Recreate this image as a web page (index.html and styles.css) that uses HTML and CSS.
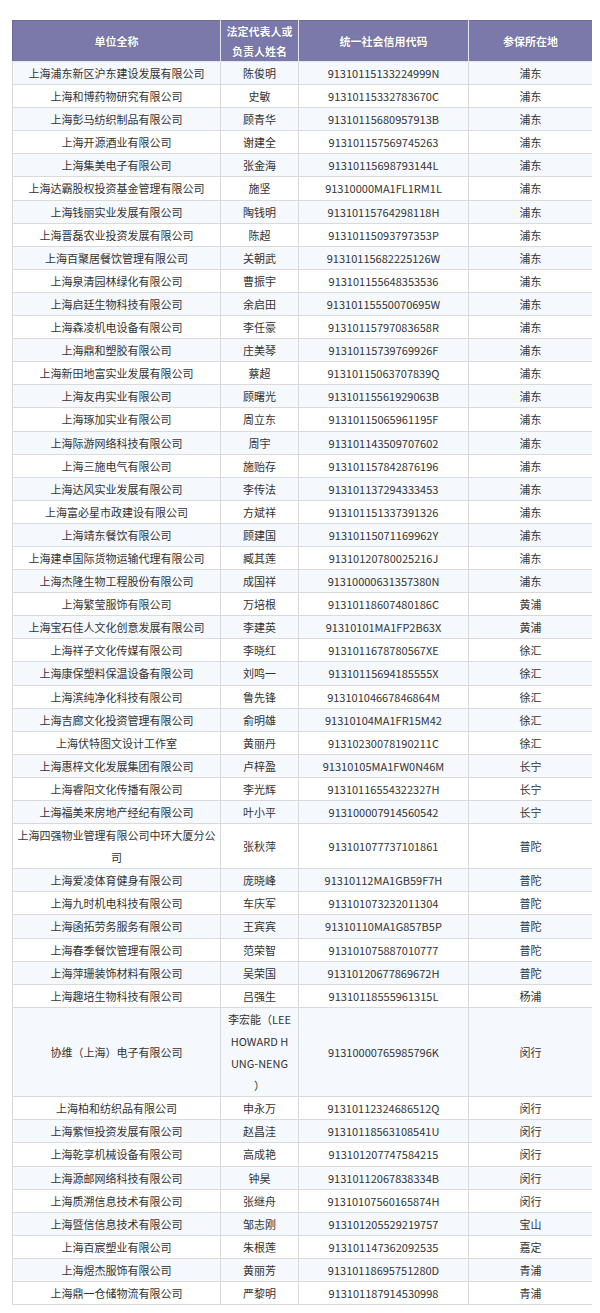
FILE: index.html
```html
<!DOCTYPE html>
<html lang="zh-CN">
<head>
<meta charset="utf-8">
<title>参保单位</title>
<link rel="stylesheet" href="styles.css">
</head>
<body>
<table class="list">
  <colgroup>
    <col class="c-name"><col class="c-rep"><col class="c-code"><col class="c-area">
  </colgroup>
  <thead>
    <tr><th>单位全称</th><th>法定代表人或<br>负责人姓名</th><th>统一社会信用代码</th><th>参保所在地</th></tr>
  </thead>
  <tbody>
    <tr><td>上海浦东新区沪东建设发展有限公司</td><td>陈俊明</td><td>91310115133224999N</td><td>浦东</td></tr>
    <tr><td>上海和博药物研究有限公司</td><td>史敏</td><td>91310115332783670C</td><td>浦东</td></tr>
    <tr><td>上海彭马纺织制品有限公司</td><td>顾青华</td><td>91310115680957913B</td><td>浦东</td></tr>
    <tr><td>上海开源酒业有限公司</td><td>谢建全</td><td>913101157569745263</td><td>浦东</td></tr>
    <tr><td>上海集美电子有限公司</td><td>张金海</td><td>91310115698793144L</td><td>浦东</td></tr>
    <tr><td>上海达霸股权投资基金管理有限公司</td><td>施坚</td><td>91310000MA1FL1RM1L</td><td>浦东</td></tr>
    <tr><td>上海钱丽实业发展有限公司</td><td>陶钱明</td><td>91310115764298118H</td><td>浦东</td></tr>
    <tr><td>上海晋磊农业投资发展有限公司</td><td>陈超</td><td>91310115093797353P</td><td>浦东</td></tr>
    <tr><td>上海百聚居餐饮管理有限公司</td><td>关朝武</td><td>91310115682225126W</td><td>浦东</td></tr>
    <tr><td>上海泉清园林绿化有限公司</td><td>曹振宇</td><td>913101155648353536</td><td>浦东</td></tr>
    <tr><td>上海启廷生物科技有限公司</td><td>余启田</td><td>91310115550070695W</td><td>浦东</td></tr>
    <tr><td>上海森凌机电设备有限公司</td><td>李任豪</td><td>91310115797083658R</td><td>浦东</td></tr>
    <tr><td>上海鼎和塑胶有限公司</td><td>庄美琴</td><td>91310115739769926F</td><td>浦东</td></tr>
    <tr><td>上海新田地富实业发展有限公司</td><td>蔡超</td><td>91310115063707839Q</td><td>浦东</td></tr>
    <tr><td>上海友冉实业有限公司</td><td>顾曙光</td><td>91310115561929063B</td><td>浦东</td></tr>
    <tr><td>上海琢加实业有限公司</td><td>周立东</td><td>91310115065961195F</td><td>浦东</td></tr>
    <tr><td>上海际游网络科技有限公司</td><td>周宇</td><td>913101143509707602</td><td>浦东</td></tr>
    <tr><td>上海三施电气有限公司</td><td>施贻存</td><td>913101157842876196</td><td>浦东</td></tr>
    <tr><td>上海达风实业发展有限公司</td><td>李传法</td><td>913101137294333453</td><td>浦东</td></tr>
    <tr><td>上海富必星市政建设有限公司</td><td>方斌祥</td><td>913101151337391326</td><td>浦东</td></tr>
    <tr><td>上海靖东餐饮有限公司</td><td>顾建国</td><td>91310115071169962Y</td><td>浦东</td></tr>
    <tr><td>上海建卓国际货物运输代理有限公司</td><td>臧其莲</td><td>91310120780025216J</td><td>浦东</td></tr>
    <tr><td>上海杰隆生物工程股份有限公司</td><td>成国祥</td><td>91310000631357380N</td><td>浦东</td></tr>
    <tr><td>上海繁莹服饰有限公司</td><td>万培根</td><td>91310118607480186C</td><td>黄浦</td></tr>
    <tr><td>上海宝石佳人文化创意发展有限公司</td><td>李建英</td><td>91310101MA1FP2B63X</td><td>黄浦</td></tr>
    <tr><td>上海祥子文化传媒有限公司</td><td>李晓红</td><td>9131011678780567XE</td><td>徐汇</td></tr>
    <tr><td>上海康保塑料保温设备有限公司</td><td>刘鸣一</td><td>91310115694185555X</td><td>徐汇</td></tr>
    <tr><td>上海滨纯净化科技有限公司</td><td>鲁先锋</td><td>91310104667846864M</td><td>徐汇</td></tr>
    <tr><td>上海吉廊文化投资管理有限公司</td><td>俞明雄</td><td>91310104MA1FR15M42</td><td>徐汇</td></tr>
    <tr><td>上海伏特图文设计工作室</td><td>黄丽丹</td><td>91310230078190211C</td><td>徐汇</td></tr>
    <tr><td>上海惠梓文化发展集团有限公司</td><td>卢梓盈</td><td>91310105MA1FW0N46M</td><td>长宁</td></tr>
    <tr><td>上海睿阳文化传播有限公司</td><td>李光辉</td><td>91310116554322327H</td><td>长宁</td></tr>
    <tr><td>上海福美来房地产经纪有限公司</td><td>叶小平</td><td>913100007914560542</td><td>长宁</td></tr>
    <tr><td>上海四强物业管理有限公司中环大厦分公司</td><td>张秋萍</td><td>913101077737101861</td><td>普陀</td></tr>
    <tr><td>上海爱凌体育健身有限公司</td><td>庞晓峰</td><td>91310112MA1GB59F7H</td><td>普陀</td></tr>
    <tr><td>上海九时机电科技有限公司</td><td>车庆军</td><td>913101073232011304</td><td>普陀</td></tr>
    <tr><td>上海函拓劳务服务有限公司</td><td>王宾宾</td><td>91310110MA1G857B5P</td><td>普陀</td></tr>
    <tr><td>上海春季餐饮管理有限公司</td><td>范荣智</td><td>913101075887010777</td><td>普陀</td></tr>
    <tr><td>上海萍珊装饰材料有限公司</td><td>吴荣国</td><td>91310120677869672H</td><td>普陀</td></tr>
    <tr><td>上海趣培生物科技有限公司</td><td>吕强生</td><td>91310118555961315L</td><td>杨浦</td></tr>
    <tr><td>协维（上海）电子有限公司</td><td>李宏能（LEE<br>HOWARD H<br>UNG-NENG<br>）</td><td>91310000765985796K</td><td>闵行</td></tr>
    <tr><td>上海柏和纺织品有限公司</td><td>申永万</td><td>91310112324686512Q</td><td>闵行</td></tr>
    <tr><td>上海紫恒投资发展有限公司</td><td>赵昌洼</td><td>91310118563108541U</td><td>闵行</td></tr>
    <tr><td>上海乾享机械设备有限公司</td><td>高成艳</td><td>913101207747584215</td><td>闵行</td></tr>
    <tr><td>上海源邮网络科技有限公司</td><td>钟昊</td><td>91310112067838334B</td><td>闵行</td></tr>
    <tr><td>上海质溯信息技术有限公司</td><td>张继舟</td><td>91310107560165874H</td><td>闵行</td></tr>
    <tr><td>上海暨信信息技术有限公司</td><td>邹志刚</td><td>913101205529219757</td><td>宝山</td></tr>
    <tr><td>上海百宸塑业有限公司</td><td>朱根莲</td><td>913101147362092535</td><td>嘉定</td></tr>
    <tr><td>上海煜杰服饰有限公司</td><td>黄丽芳</td><td>91310118695751280D</td><td>青浦</td></tr>
    <tr><td>上海鼎一仓储物流有限公司</td><td>严黎明</td><td>913101187914530998</td><td>青浦</td></tr>
  </tbody>
</table>
</body>
</html>
```
FILE: styles.css
```css
html, body {
  background: #ffffff;
}
body {
  margin: 20px 8px 0 12px;
  font-family: "Noto Sans CJK SC", "Microsoft YaHei", sans-serif;
  font-size: 11px;
  color: #333333;
}
.list {
  width: 580px;
  border-collapse: collapse;
  table-layout: fixed;
}
.c-name { width: 208px; }
.c-rep { width: 78px; }
.c-code { width: 170px; }
.c-area { width: 124px; }
.list th {
  background: #7b79a9;
  color: #ffffff;
  font-weight: bold;
  line-height: 20px;
  padding: 0 4px;
  border: 1px solid #e4e4ee;
  text-shadow: 0 0 1px #4e4c80;
  text-align: center;
}
.list thead tr th {
  border-top-color: #6c6a9e;
}
.list thead tr th:first-child { border-left-color: #6c6a9e; }
.list thead tr th:last-child { border-right-color: #6c6a9e; }
.list td {
  line-height: 22.1px;
  padding: 0 4px;
  border: 1px solid #dadada;
  text-align: center;
  vertical-align: middle;
}
.list tbody tr:nth-child(odd) td {
  background: #f5f8fd;
}
.list tbody tr:nth-child(even) td {
  background: #ffffff;
}
```
